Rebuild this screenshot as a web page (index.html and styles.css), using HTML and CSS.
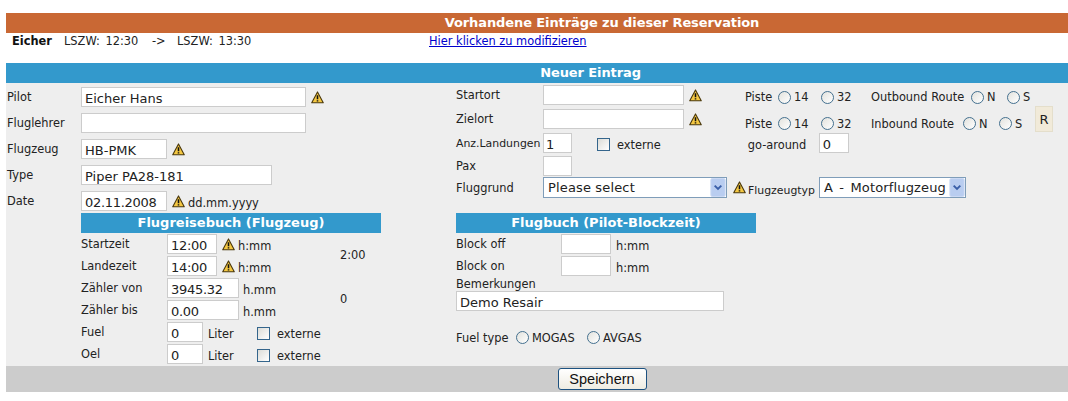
FILE: index.html
```html
<!DOCTYPE html>
<html lang="de">
<head>
<meta charset="utf-8">
<title>Reservation</title>
<link rel="stylesheet" href="styles.css">
</head>
<body>
<svg class="defs" width="0" height="0" aria-hidden="true"><defs>
<symbol id="warn" viewBox="0 0 14 14">
<path d="M7 1 L13.2 12.6 H.8 Z" fill="#f5c842" stroke="#4a380c" stroke-width="1.2" stroke-linejoin="round"/>
<path d="M7 4.6 V8.8 M7 10 V11.4" stroke="#111" stroke-width="1.7"/>
</symbol>
<symbol id="arrow" viewBox="0 0 16 20">
<rect x=".5" y=".5" width="15" height="19" rx="1.5" fill="#b9cdf0" stroke="#c9d8f3"/>
<path d="M4.5 8 L8 11.5 L11.5 8" fill="none" stroke="#3a5fa8" stroke-width="2"/>
</symbol>
</defs></svg>
<header class="bar orange">Vorhandene Einträge zu dieser Reservation</header>
<div class="existing">
<b class="who">Eicher</b><span class="route">LSZW: 12:30</span><span class="arr">-&gt;</span><span class="route route2">LSZW: 13:30</span>
<a class="modify" href="#">Hier klicken zu modifizieren</a>
</div>
<h2 class="bar blue">Neuer Eintrag</h2>
<form class="form">
<div class="left">
<div class="row"><label class="lab">Pilot</label><input class="inp w225" value="Eicher Hans"><svg class="warn"><use href="#warn"/></svg></div>
<div class="row"><label class="lab">Fluglehrer</label><input class="inp w225" value=""></div>
<div class="row"><label class="lab">Flugzeug</label><input class="inp w86" value="HB-PMK"><svg class="warn"><use href="#warn"/></svg></div>
<div class="row"><label class="lab">Type</label><input class="inp w191" value="Piper PA28-181"></div>
<div class="row"><label class="lab">Date</label><input class="inp w86 num" value="02.11.2008"><svg class="warn"><use href="#warn"/></svg><span class="unit tight">dd.mm.yyyy</span></div>
<h3 class="sub subleft">Flugreisebuch (Flugzeug)</h3>
<div class="log">
<label>Startzeit</label><div class="cell"><input class="inp w50 num" value="12:00"><svg class="warn"><use href="#warn"/></svg><span class="unit tight">h:mm</span></div><div class="total">2:00</div>
<label>Landezeit</label><div class="cell"><input class="inp w50 num" value="14:00"><svg class="warn"><use href="#warn"/></svg><span class="unit tight">h:mm</span></div>
<label>Zähler von</label><div class="cell"><input class="inp w72 num" value="3945.32"><span class="unit">h.mm</span></div><div class="total">0</div>
<label>Zähler bis</label><div class="cell"><input class="inp w72 num" value="0.00"><span class="unit">h.mm</span></div>
<label>Fuel</label><div class="cell"><input class="inp w36" value="0"><span class="unit liter">Liter</span><input class="chk" type="checkbox"><span class="unit">externe</span></div><div></div>
<label>Oel</label><div class="cell"><input class="inp w36" value="0"><span class="unit liter">Liter</span><input class="chk" type="checkbox"><span class="unit">externe</span></div><div></div>
</div>
</div>
<div class="right">
<div class="top">
<div class="rrow"><label class="rlab">Startort</label><input class="inp w141" value=""><svg class="warn"><use href="#warn"/></svg>
<div class="opts opts1"><span class="piste">Piste</span><input class="rad" type="radio" name="p1"><span class="rt w27">14</span><input class="rad" type="radio" name="p1"><span class="rt w34">32</span><span class="w100">Outbound Route</span><input class="rad" type="radio" name="o"><span class="rt w20">N</span><input class="rad" type="radio" name="o"><span class="rt">S</span></div></div>
<div class="rrow"><label class="rlab">Zielort</label><input class="inp w141" value=""><svg class="warn"><use href="#warn"/></svg>
<div class="opts opts2"><span class="piste">Piste</span><input class="rad" type="radio" name="p2"><span class="rt w27">14</span><input class="rad" type="radio" name="p2"><span class="rt w34">32</span><span class="w92">Inbound Route</span><input class="rad" type="radio" name="i"><span class="rt w20">N</span><input class="rad" type="radio" name="i"><span class="rt">S</span></div></div>
<div class="rrow"><label class="rlab fit">Anz.Landungen</label><input class="inp w29" value="1"><input class="chk c1" type="checkbox"><span class="unit">externe</span><span class="go">go-around</span><input class="inp w30" value="0"></div>
<div class="rrow r21"><label class="rlab">Pax</label><input class="inp w29" value=""></div>
<div class="rrow r21 sel-row"><label class="rlab">Fluggrund</label>
<span class="selwrap w184"><select class="sel"><option>Please select</option></select><svg class="arrow"><use href="#arrow"/></svg></span>
<svg class="warn w-sel"><use href="#warn"/></svg><span class="unit typ fit">Flugzeugtyp</span>
<span class="selwrap w147"><select class="sel sel-wide"><option>A - Motorflugzeug</option></select><svg class="arrow"><use href="#arrow"/></svg></span></div>
<button class="r-btn" type="button">R</button>
</div>
<h3 class="sub">Flugbuch (Pilot-Blockzeit)</h3>
<div class="block"><label>Block off</label><input class="inp w50" value=""><span class="unit">h:mm</span></div>
<div class="block"><label>Block on</label><input class="inp w50" value=""><span class="unit">h:mm</span></div>
<label class="bem">Bemerkungen</label>
<input class="inp w268" value="Demo Resair">
<div class="fuel"><span class="ft">Fuel type</span><input class="rad" type="radio" name="f"><span class="fo">MOGAS</span><input class="rad" type="radio" name="f"><span class="fa">AVGAS</span></div>
</div>
</form>
<footer class="foot"><button class="save" type="button">Speichern</button></footer>
</body>
</html>
```
FILE: styles.css
```css
* { box-sizing: border-box; }
html, body { margin: 0; padding: 0; background: #fff; }
body { padding: 13px 0 0 6px; font: 11.4px "DejaVu Sans", Verdana, sans-serif; color: #222; }
.defs { position: absolute; }
.bar { margin: 0; height: 20px; color: #fff; text-align: center; letter-spacing: -.1px; font: bold 13px/20px "DejaVu Sans", Verdana, sans-serif; }
.orange { background: #c96834; padding-left: 130px; }
.blue { background: #3399cc; padding-left: 107px; }
.existing { height: 30px; display: flex; align-items: flex-start; padding: 2px 0 0 6px; line-height: 13px; }
.who { width: 52px; color: #111; }
.route { width: 88px; word-spacing: 2px; }
.arr { width: 25px; }
.route2 { width: 252px; }
.modify { color: #0000cc; }
.form { display: flex; height: 283px; background: #eee; }
.left { width: 450px; padding-top: 1px; flex: none; }
.row { display: flex; align-items: center; height: 26px; }
.lab { width: 75px; padding: 0 0 1px 1px; }
.inp { height: 20px; border: 1px solid #ccc; background: #fff; padding: 2px 3px 0; font: 13px "DejaVu Sans", Verdana, sans-serif; color: #222; border-radius: 0; outline: 0; flex: none; }
.num { letter-spacing: -.3px; }
.w225 { width: 225px; }
.w191 { width: 191px; }
.w86 { width: 86px; }
.w50 { width: 50px; }
.w72 { width: 72px; }
.w36 { width: 36px; }
.w141 { width: 141px; }
.w29 { width: 29px; padding-left: 2px; }
.w30 { width: 30px; }
.w268 { width: 268px; display: block; }
.warn { width: 13px; height: 13px; margin-left: 5px; flex: none; }
.unit { margin-left: 4px; padding-top: 3px; white-space: nowrap; }
.tight { margin-left: 3px; }
.liter { width: 25px; margin-left: 5px; }
.sub { margin: 0; width: 300px; height: 20px; background: #3399cc; color: #fff; text-align: center; font: bold 13px/20px "DejaVu Sans", Verdana, sans-serif; }
.subleft { margin: -1px 0 0 75px; }
.log { display: grid; grid-template-columns: 86px 173px 1fr; grid-auto-rows: 22px; margin-left: 75px; align-items: center; }
.cell { display: flex; align-items: center; }
.total { grid-row: span 2; padding-bottom: 1px; }
.chk { appearance: none; width: 13px; height: 13px; margin: 2px 3px 0 24px; border: 1px solid #34658c; background: linear-gradient(135deg, #dcdcd7, #fff); flex: none; }
.rad { appearance: none; width: 13px; height: 13px; margin: 0; border: 1px solid #44708f; border-radius: 50%; background: linear-gradient(135deg, #e2e2dd, #fff); flex: none; }
.right { flex: 1; position: relative; }
.top { height: 130px; position: relative; }
.rrow { display: flex; align-items: center; height: 24px; }
.r21 { height: 21px; }
.sel-row { margin-top: 1px; }
.rlab { width: 87px; white-space: nowrap; flex: none; }
.fit { font-size: 10.9px; }
.opts { display: flex; align-items: center; white-space: nowrap; }
.opts1 { padding-top: 4px; }
.opts2 { padding-top: 9px; }
.piste { margin-left: 43px; width: 33px; }
.rt { margin-left: 3px; }
.w27 { width: 27px; }
.w34 { width: 34px; }
.w20 { width: 20px; }
.w100 { width: 100px; }
.w92 { width: 92px; }
.chk.c1 { margin: 2px 3px 0 25px; }
.go { margin-left: 87px; width: 71px; padding-top: 3px; }
.selwrap { position: relative; display: block; height: 21px; flex: none; }
.w184 { width: 184px; }
.w147 { width: 147px; }
.sel { appearance: none; width: 100%; height: 100%; border: 1px solid #7f9db9; background: #fff; font: 13px "DejaVu Sans", Verdana, sans-serif; letter-spacing: .15px; padding: 0 18px 0 4px; color: #222; border-radius: 0; outline: 0; }
.sel-wide { word-spacing: 2px; }
.arrow { position: absolute; right: 1px; top: 1px; width: 16px; height: 19px; }
.w-sel { margin-left: 6px; }
.typ { width: 71px; margin-left: 2px; padding-top: 5px; }
.r-btn { position: absolute; left: 579px; top: 23px; width: 18px; height: 26px; padding: 0; border: 1px solid #e4decb; background: #f1ead9; font: 13px "DejaVu Sans", Verdana, sans-serif; color: #222; }
.block { display: flex; align-items: center; height: 22px; }
.block label { width: 105px; }
.block .unit { margin-left: 5px; }
.bem { display: block; height: 14px; line-height: 14px; }
.fuel { display: flex; align-items: center; margin-top: 19px; height: 15px; }
.ft { width: 60px; }
.fo { width: 55px; margin-left: 3px; }
.fa { margin-left: 3px; }
.foot { height: 26px; background: #ccc; display: flex; justify-content: center; align-items: center; padding-left: 130px; }
.save { width: 89px; height: 22px; padding: 0; border: 1px solid #1c5180; border-radius: 3px; background: linear-gradient(#fff, #eeece2); font: 14.5px "Liberation Sans", Arial, sans-serif; color: #111; }
```
